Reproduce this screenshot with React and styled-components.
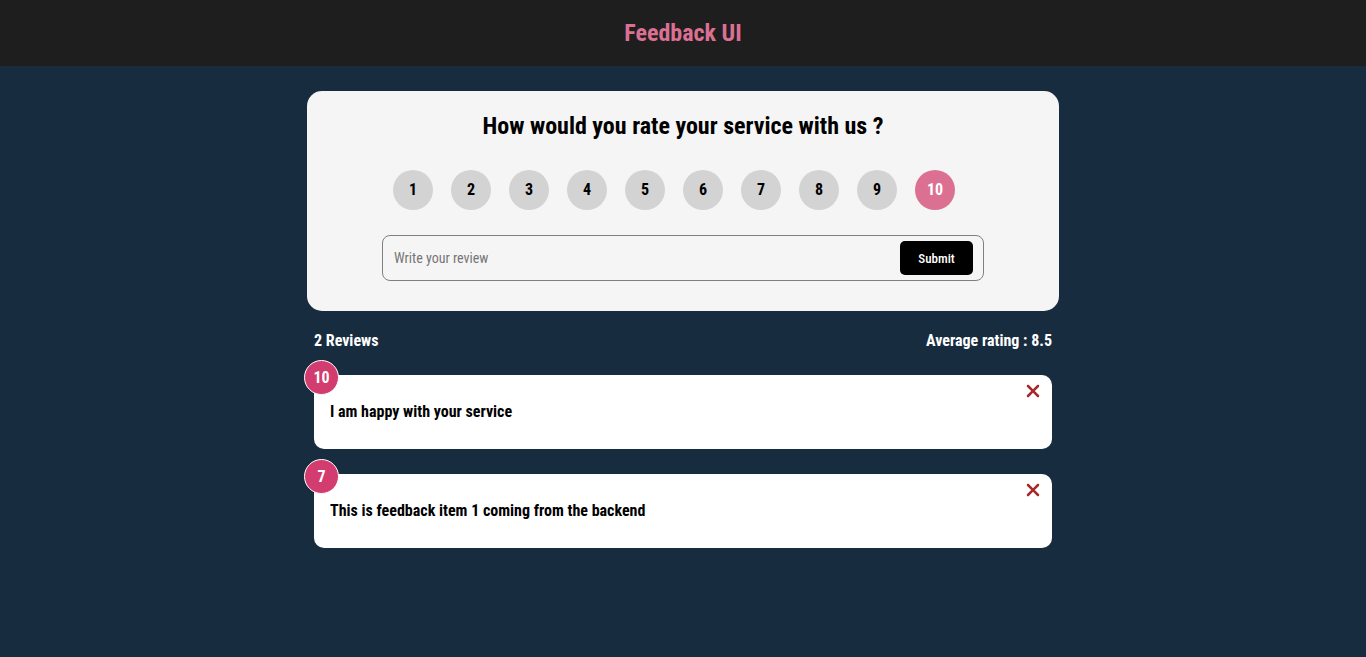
import React, { useState } from "react";
import styled, { createGlobalStyle } from "styled-components";
import { FaXmark } from "react-icons/fa6";

const GlobalStyle = createGlobalStyle`
  * { box-sizing: border-box; }
  body {
    margin: 0;
    background: #182c40;
    font-family: "Roboto Condensed", Roboto, sans-serif;
    color: #000;
  }
  button, input { font-family: inherit; }
`;

const Header = styled.header`
  display: flex;
  justify-content: center;
  align-items: center;
  padding: 19px;
  background: #1e1e1e;
`;

const Logo = styled.h1`
  margin: 0;
  font-size: 24px;
  line-height: 28px;
  font-weight: 700;
  color: #db7093;
`;

const Main = styled.main`
  max-width: 752px;
  margin: 25px auto;
`;

const Card = styled.form`
  display: flex;
  flex-direction: column;
  align-items: center;
  padding: 21px 20px 30px;
  border-radius: 15px;
  background: #f5f5f5;
`;

const Question = styled.h2`
  margin: 0 0 30px;
  font-size: 24px;
  line-height: 28px;
  font-weight: 700;
`;

const Ratings = styled.div`
  display: flex;
  gap: 18px;
  margin: 0 0 25px;
  padding-right: 18px;
`;

const RatingOption = styled.label`
  width: 40px;
  height: 40px;
  border-radius: 50%;
  font-size: 16px;
  line-height: 39px;
  font-weight: 700;
  text-align: center;
  cursor: pointer;
  background: ${(p) => (p.$active ? "#db7093" : "#d3d3d3")};
  color: ${(p) => (p.$active ? "#fff" : "#000")};
`;

const HiddenRadio = styled.input`
  position: absolute;
  opacity: 0;
  pointer-events: none;
`;

const ReviewField = styled.div`
  display: flex;
  align-items: center;
  width: 100%;
  max-width: 602px;
  padding: 5px 10px;
  border: 1px solid gray;
  border-radius: 8px;
`;

const ReviewInput = styled.input`
  flex: 1;
  min-width: 0;
  padding: 1px;
  border: 0;
  outline: 0;
  background: transparent;
  font-size: 14px;
  &::placeholder { color: #757575; }
`;

const SubmitButton = styled.button`
  width: 73px;
  height: 34px;
  padding: 0;
  border: 0;
  border-radius: 5px;
  background: #000;
  color: #fff;
  font-size: 13px;
  font-weight: 500;
  cursor: pointer;
`;

const Stats = styled.div`
  display: flex;
  justify-content: space-between;
  margin: 20px 7px 25px;
  font-size: 16px;
  line-height: 19px;
  font-weight: 700;
  color: #fff;
`;

const ReviewList = styled.ul`
  display: flex;
  flex-direction: column;
  gap: 25px;
  margin: 0 7px;
  padding: 0;
  list-style: none;
`;

const ReviewItem = styled.li`
  position: relative;
  padding: 27px 16px 28px;
  border-radius: 10px;
  background: #fff;
  font-size: 16px;
  line-height: 19px;
  font-weight: 700;
`;

const Score = styled.span`
  position: absolute;
  top: -15px;
  left: -10px;
  display: flex;
  align-items: center;
  justify-content: center;
  width: 35px;
  height: 35px;
  border: 1px solid #fff;
  border-radius: 50%;
  background: #d23c6e;
  color: #fff;
`;

const RemoveButton = styled.button`
  position: absolute;
  top: 6px;
  right: 9px;
  display: flex;
  padding: 0;
  border: 0;
  background: none;
  color: #a52a2a;
  font-size: 20px;
  cursor: pointer;
`;

const SCORES = [1, 2, 3, 4, 5, 6, 7, 8, 9, 10];

const INITIAL = [
  { id: 1, rating: 10, text: "I am happy with your service" },
  { id: 2, rating: 7, text: "This is feedback item 1 coming from the backend" },
];

export default function App() {
  const [rating, setRating] = useState(10);
  const [text, setText] = useState("");
  const [reviews, setReviews] = useState(INITIAL);

  const average = reviews.length
    ? Number((reviews.reduce((sum, r) => sum + r.rating, 0) / reviews.length).toFixed(1))
    : 0;

  const submit = (e) => {
    e.preventDefault();
    if (!text.trim()) return;
    setReviews([{ id: Date.now(), rating, text }, ...reviews]);
    setText("");
  };

  return (
    <>
      <GlobalStyle />
      <Header>
        <Logo>Feedback UI</Logo>
      </Header>
      <Main>
        <Card onSubmit={submit}>
          <Question>How would you rate your service with us ?</Question>
          <Ratings role="radiogroup" aria-label="Rating">
            {SCORES.map((n) => (
              <RatingOption key={n} $active={n === rating}>
                <HiddenRadio
                  type="radio"
                  name="rating"
                  value={n}
                  checked={n === rating}
                  onChange={() => setRating(n)}
                />
                {n}
              </RatingOption>
            ))}
          </Ratings>
          <ReviewField>
            <ReviewInput
              type="text"
              aria-label="Write your review"
              placeholder="Write your review"
              value={text}
              onChange={(e) => setText(e.target.value)}
            />
            <SubmitButton type="submit">Submit</SubmitButton>
          </ReviewField>
        </Card>
        <Stats>
          <span>{reviews.length} Reviews</span>
          <span>Average rating : {average}</span>
        </Stats>
        <ReviewList>
          {reviews.map((r) => (
            <ReviewItem key={r.id}>
              <Score>{r.rating}</Score>
              {r.text}
              <RemoveButton
                type="button"
                aria-label="Remove review"
                onClick={() => setReviews(reviews.filter((x) => x.id !== r.id))}
              >
                <FaXmark />
              </RemoveButton>
            </ReviewItem>
          ))}
        </ReviewList>
      </Main>
    </>
  );
}
